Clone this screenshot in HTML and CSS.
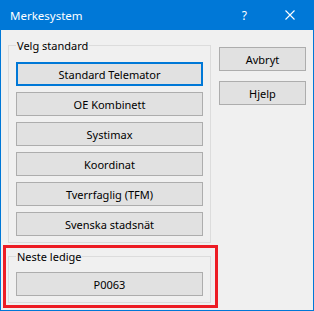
FILE: index.html
```html
<!DOCTYPE html>
<html lang="no">
<head>
    <meta charset="UTF-8">
    <title>Merkesystem</title>
    <link rel="stylesheet" href="styles.css">
</head>
<body>
    <div class="window">
        <div class="titlebar">
            <span class="title">Merkesystem</span>
            <span class="help">?</span>
            <svg class="close" width="10" height="10" viewBox="0 0 10 10">
                <path d="M0.5 0.5 L9.5 9.5 M9.5 0.5 L0.5 9.5" stroke="#fff" stroke-width="1.1" fill="none"/>
            </svg>
        </div>

        <div class="content">
            <div class="groups">
                <fieldset class="group">
                    <legend>Velg standard</legend>
                    <button class="btn default">Standard Telemator</button>
                    <button class="btn">OE Kombinett</button>
                    <button class="btn">Systimax</button>
                    <button class="btn">Koordinat</button>
                    <button class="btn">Tverrfaglig (TFM)</button>
                    <button class="btn">Svenska stadsnät</button>
                </fieldset>

                <fieldset class="group next">
                    <legend>Neste ledige</legend>
                    <button class="btn">P0063</button>
                </fieldset>
            </div>

            <div class="side">
                <button class="btn">Avbryt</button>
                <button class="btn">Hjelp</button>
            </div>
        </div>

        <!-- markering rundt "Neste ledige" -->
        <div class="highlight"></div>
    </div>
</body>
</html>
```

FILE: styles.css
```css
* {
    box-sizing: border-box;
}

body {
    margin: 0;
    font-family: "Noto Sans", "Liberation Sans", sans-serif;
    font-size: 11px;
    background: #fff;
}

/* vindu */
.window {
    position: relative;
    width: 314px;
    height: 311px;
    background: #0078d7;
    padding: 0 1px 1px 1px;
    display: flex;
    flex-direction: column;
}

/* tittellinje */
.titlebar {
    height: 30px;
    display: flex;
    align-items: center;
    color: #fff;
    font-size: 11.5px;
}

.title {
    padding-left: 9px;
    flex: 1;
}

.help {
    font-size: 12px;
    margin-right: 38px;
}

.close {
    margin-right: 18px;
}

/* innhold */
.content {
    flex: 1;
    background: #f0f0f0;
    display: flex;
    gap: 8px;
    padding: 8px 7px 0 7px;
}

.groups {
    width: 203px;
}

.group {
    margin: 0;
    padding: 9px 7px 6px 7px;
    border: 1px solid #dcdcdc;
    min-width: 0;
}

.group legend {
    padding: 0 1px;
    line-height: 15px;
    color: #000;
}

.group.next {
    margin-top: 6px;
    padding-top: 8px;
}

.btn {
    display: block;
    width: 100%;
    height: 24px;
    padding: 0;
    margin: 0;
    font-family: inherit;
    font-size: 11px;
    color: #000;
    background: #e1e1e1;
    border: 1px solid #adadad;
}

.btn + .btn {
    margin-top: 6px;
}

.btn.default {
    border: 2px solid #0078d7;
}

.side {
    width: 87px;
    padding-top: 9px;
}

.side .btn + .btn {
    margin-top: 10px;
}

/* rød markering */
.highlight {
    position: absolute;
    left: 3px;
    top: 245px;
    width: 215px;
    height: 63px;
    border: 3px solid #ed1c24;
}
```
